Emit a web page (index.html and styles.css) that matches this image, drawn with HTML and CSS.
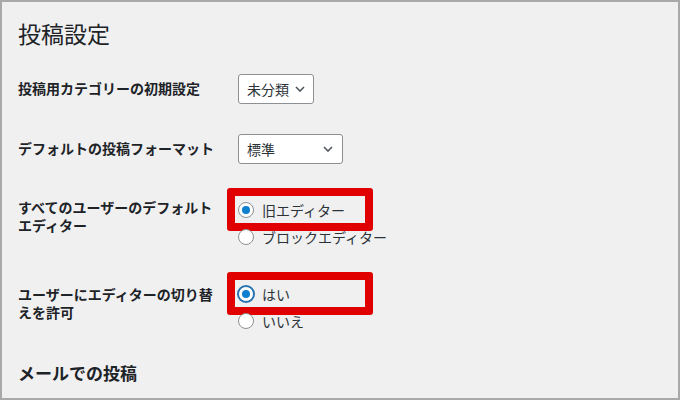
FILE: index.html
```html
<!DOCTYPE html>
<html lang="ja">
<head>
<meta charset="utf-8">
<title>投稿設定</title>
<link rel="stylesheet" href="styles.css">
</head>
<body>
<div class="frame">
  <h1 class="title">投稿設定</h1>
  <div class="form">
    <div class="row">
      <div class="th">投稿用カテゴリーの初期設定</div>
      <div class="td">
        <div class="select sel-cat">
          <span>未分類</span>
          <svg class="chev" width="10" height="6" viewBox="0 0 10 6"><path d="M1 1 L5 5 L9 1" fill="none" stroke="#50575e" stroke-width="1.6"/></svg>
        </div>
      </div>
    </div>
    <div class="row">
      <div class="th">デフォルトの投稿フォーマット</div>
      <div class="td">
        <div class="select sel-fmt">
          <span>標準</span>
          <svg class="chev" width="10" height="6" viewBox="0 0 10 6"><path d="M1 1 L5 5 L9 1" fill="none" stroke="#50575e" stroke-width="1.6"/></svg>
        </div>
      </div>
    </div>
    <div class="row row-radio">
      <div class="th th-radio">すべてのユーザーのデフォルトエディター</div>
      <div class="td td-radio">
        <div class="opt highlighted">
          <span class="radio checked"></span><span class="opt-label">旧エディター</span>
          <span class="mark"></span>
        </div>
        <div class="opt">
          <span class="radio"></span><span class="opt-label">ブロックエディター</span>
        </div>
      </div>
    </div>
    <div class="row row-radio2">
      <div class="th">ユーザーにエディターの切り替えを許可</div>
      <div class="td">
        <div class="opt highlighted">
          <span class="radio checked focused"></span><span class="opt-label">はい</span>
          <span class="mark"></span>
        </div>
        <div class="opt">
          <span class="radio"></span><span class="opt-label">いいえ</span>
        </div>
      </div>
    </div>
  </div>
  <h2 class="subtitle">メールでの投稿</h2>
</div>
</body>
</html>
```

FILE: styles.css
```css
html, body {
  margin: 0;
  padding: 0;
}
body {
  width: 680px;
  height: 400px;
  overflow: hidden;
  font-family: "Noto Sans CJK JP", "Noto Sans", sans-serif;
  color: #1d2327;
}
.frame {
  box-sizing: border-box;
  width: 680px;
  height: 400px;
  border: 2px solid #a9a9a9;
  background: #f0f0f1;
  padding: 16px 0 0 16px;
}
.title {
  margin: 0;
  font-size: 23px;
  font-weight: 400;
  line-height: 30px;
  color: #1d2327;
}
.form {
  margin-top: 11px;
}
.row {
  display: flex;
}
.th {
  box-sizing: border-box;
  width: 220px;
  padding: 20px 20px 20px 0;
  font-size: 14px;
  font-weight: 700;
  line-height: 18px;
}
.th-radio {
  padding-top: 19px;
}
.td {
  padding: 15px 0;
}
.td-radio {
  padding-top: 17px;
}
.select {
  box-sizing: border-box;
  height: 30px;
  border: 1px solid #8c8f94;
  border-radius: 3px;
  background: #fff;
  display: flex;
  align-items: center;
  justify-content: space-between;
  padding: 0 8px 0 8px;
  font-size: 14px;
  color: #2c3338;
}
.sel-cat {
  width: 76px;
}
.sel-fmt {
  width: 105px;
  padding-right: 9px;
}
.chev {
  display: block;
}
.opt {
  position: relative;
  height: 27px;
  display: flex;
  align-items: center;
  font-size: 14px;
  color: #2c3338;
}
.radio {
  box-sizing: border-box;
  width: 16px;
  height: 16px;
  border: 1px solid #8c8f94;
  border-radius: 50%;
  background: #fff;
  margin-right: 8px;
  display: flex;
  align-items: center;
  justify-content: center;
}
.radio.checked::after {
  content: "";
  width: 8px;
  height: 8px;
  border-radius: 50%;
  background: #0f7fd0;
}
.radio.focused {
  border-color: #2271b1;
  box-shadow: 0 0 0 1px #2271b1;
}
.opt-label {
  line-height: 18px;
}
.mark {
  position: absolute;
  left: -11px;
  top: -8px;
  width: 146px;
  height: 43px;
  box-sizing: border-box;
  border: 8px solid #e00000;
  border-radius: 3px;
}
.subtitle {
  margin: 13px 0 0;
  font-size: 17px;
  font-weight: 700;
  line-height: 22px;
  color: #1d2327;
}
```
